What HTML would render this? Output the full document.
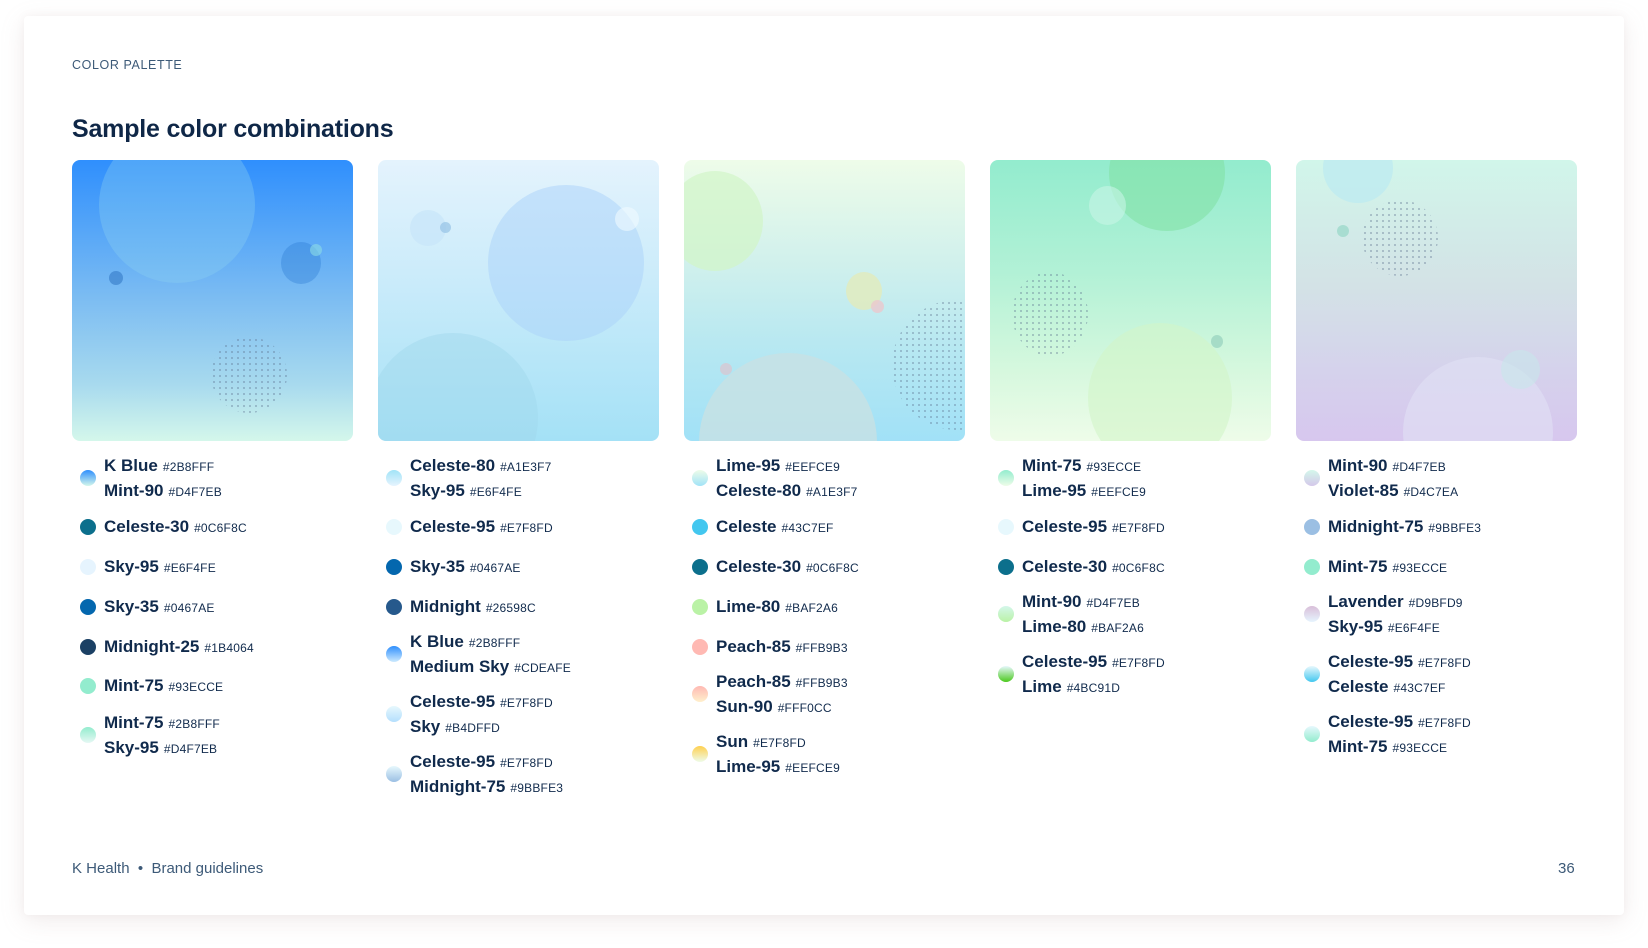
<!DOCTYPE html>
<html><head><meta charset="utf-8"><style>
*{margin:0;padding:0;box-sizing:border-box}
body{width:1648px;height:948px;background:#fff;font-family:"Liberation Sans",sans-serif;position:relative;overflow:hidden}
.panel{position:absolute;left:24px;top:16px;width:1600px;height:899px;background:#fff;border-radius:4px;box-shadow:0 6px 24px rgba(180,150,150,.18),0 0 8px rgba(180,150,150,.08)}
.lbl{position:absolute;left:72px;top:58px;font-size:12.5px;letter-spacing:.6px;color:#3d5a78}
h1{position:absolute;left:72px;top:115px;font-size:25px;font-weight:bold;color:#0f2747;letter-spacing:-.2px}
.card{position:absolute;top:160px;width:281px;height:281px;border-radius:8px;overflow:hidden}
.c{position:absolute;border-radius:50%}
.dots{position:absolute;border-radius:50%;background-image:radial-gradient(circle,rgba(90,110,140,.45) .8px,transparent 1.1px);background-size:6px 6px}
.it{position:absolute;font-size:17px;font-weight:bold;color:#102a4c;line-height:24px;white-space:nowrap}
.it small{font-size:12px;font-weight:normal;letter-spacing:.2px;margin-left:5px;color:#102a4c}
.d{position:absolute;width:16px;height:16px;border-radius:50%}
.ft{position:absolute;top:860px;font-size:15px;color:#3d5a78}
</style></head><body>
<div class="panel"></div>
<div class="lbl">COLOR PALETTE</div>
<h1>Sample color combinations</h1>

<div class="card" style="left:72px;background:linear-gradient(#2f8ffd,#7dbdf2 50%,#a8daee 80%,#d4f7eb)">
 <div class="c" style="left:27px;top:-33px;width:156px;height:156px;background:rgba(140,210,240,.35)"></div>
 <div class="c" style="left:209px;top:82px;width:40px;height:42px;background:rgba(40,120,210,.35)"></div>
 <div class="c" style="left:238px;top:84px;width:12px;height:12px;background:rgba(140,220,230,.6)"></div>
 <div class="c" style="left:37px;top:111px;width:14px;height:14px;background:rgba(40,110,190,.5)"></div>
 <div class="dots" style="left:139px;top:177px;width:76px;height:76px"></div>
</div>

<div class="card" style="left:378px;background:linear-gradient(#e4f3fd,#c9ebfa 45%,#a4e1f6)">
 <div class="c" style="left:110px;top:25px;width:156px;height:156px;background:rgba(170,210,250,.5)"></div>
 <div class="c" style="left:-10px;top:173px;width:170px;height:170px;background:rgba(160,215,235,.45)"></div>
 <div class="c" style="left:32px;top:50px;width:36px;height:36px;background:rgba(200,230,250,.7)"></div>
 <div class="c" style="left:62px;top:62px;width:11px;height:11px;background:rgba(150,195,230,.7)"></div>
 <div class="c" style="left:237px;top:47px;width:24px;height:24px;background:rgba(240,250,255,.6)"></div>
</div>

<div class="card" style="left:684px;background:linear-gradient(#eefce9,#d2f1ec 35%,#b8e8f1 65%,#a1e1f7)">
 <div class="c" style="left:-17px;top:11px;width:96px;height:100px;background:rgba(210,245,200,.7)"></div>
 <div class="c" style="left:15px;top:193px;width:178px;height:178px;background:rgba(200,225,228,.8)"></div>
 <div class="c" style="left:162px;top:112px;width:36px;height:38px;background:rgba(225,235,190,.85)"></div>
 <div class="c" style="left:187px;top:140px;width:13px;height:13px;background:rgba(235,200,205,.8)"></div>
 <div class="c" style="left:36px;top:203px;width:12px;height:12px;background:rgba(215,200,210,.8)"></div>
 <div class="dots" style="left:208px;top:140px;width:130px;height:130px"></div>
</div>

<div class="card" style="left:990px;background:linear-gradient(#93ecce,#b2f1d6 40%,#d6f8de 75%,#eefce9)">
 <div class="c" style="left:119px;top:-45px;width:116px;height:116px;background:rgba(130,225,165,.6)"></div>
 <div class="c" style="left:98px;top:163px;width:144px;height:150px;background:rgba(210,245,200,.6)"></div>
 <div class="c" style="left:99px;top:26px;width:37px;height:39px;background:rgba(200,245,230,.6)"></div>
 <div class="c" style="left:221px;top:175px;width:12px;height:13px;background:rgba(150,210,190,.7)"></div>
 <div class="dots" style="left:22px;top:112px;width:76px;height:84px"></div>
</div>

<div class="card" style="left:1296px;background:linear-gradient(#d1f6ea,#d3e2e6 45%,#d5d2ec 75%,#d7c7ee)">
 <div class="c" style="left:27px;top:-27px;width:70px;height:70px;background:rgba(190,235,240,.8)"></div>
 <div class="c" style="left:107px;top:197px;width:150px;height:150px;background:rgba(225,225,245,.6)"></div>
 <div class="c" style="left:205px;top:190px;width:39px;height:39px;background:rgba(200,230,235,.6)"></div>
 <div class="c" style="left:41px;top:65px;width:12px;height:12px;background:rgba(150,215,200,.7)"></div>
 <div class="dots" style="left:66px;top:40px;width:76px;height:76px"></div>
</div>

<div class="d" style="left:80px;top:470px;background:linear-gradient(#2f8ffd,#d4f7eb)"></div>
<div class="it" style="left:104px;top:454px">K Blue<small>#2B8FFF</small><br>Mint-90<small>#D4F7EB</small></div>
<div class="d" style="left:80px;top:519px;background:#0c6f8c"></div>
<div class="it" style="left:104px;top:515px">Celeste-30<small>#0C6F8C</small></div>
<div class="d" style="left:80px;top:559px;background:#e6f4fe"></div>
<div class="it" style="left:104px;top:555px">Sky-95<small>#E6F4FE</small></div>
<div class="d" style="left:80px;top:599px;background:#0467ae"></div>
<div class="it" style="left:104px;top:595px">Sky-35<small>#0467AE</small></div>
<div class="d" style="left:80px;top:639px;background:#1b4064"></div>
<div class="it" style="left:104px;top:635px">Midnight-25<small>#1B4064</small></div>
<div class="d" style="left:80px;top:678px;background:#93ecce"></div>
<div class="it" style="left:104px;top:674px">Mint-75<small>#93ECCE</small></div>
<div class="d" style="left:80px;top:727px;background:linear-gradient(#93ecce,#e6f8f4)"></div>
<div class="it" style="left:104px;top:711px">Mint-75<small>#2B8FFF</small><br>Sky-95<small>#D4F7EB</small></div>

<div class="d" style="left:386px;top:470px;background:linear-gradient(#a1e3f7,#e6f4fe)"></div>
<div class="it" style="left:410px;top:454px">Celeste-80<small>#A1E3F7</small><br>Sky-95<small>#E6F4FE</small></div>
<div class="d" style="left:386px;top:519px;background:#e7f8fd"></div>
<div class="it" style="left:410px;top:515px">Celeste-95<small>#E7F8FD</small></div>
<div class="d" style="left:386px;top:559px;background:#0467ae"></div>
<div class="it" style="left:410px;top:555px">Sky-35<small>#0467AE</small></div>
<div class="d" style="left:386px;top:599px;background:#26598c"></div>
<div class="it" style="left:410px;top:595px">Midnight<small>#26598C</small></div>
<div class="d" style="left:386px;top:646px;background:linear-gradient(#2f8ffd,#cdeafe)"></div>
<div class="it" style="left:410px;top:630px">K Blue<small>#2B8FFF</small><br>Medium Sky<small>#CDEAFE</small></div>
<div class="d" style="left:386px;top:706px;background:linear-gradient(#e7f8fd,#b4dffd)"></div>
<div class="it" style="left:410px;top:690px">Celeste-95<small>#E7F8FD</small><br>Sky<small>#B4DFFD</small></div>
<div class="d" style="left:386px;top:766px;background:linear-gradient(#e7f8fd,#9bbfe3)"></div>
<div class="it" style="left:410px;top:750px">Celeste-95<small>#E7F8FD</small><br>Midnight-75<small>#9BBFE3</small></div>

<div class="d" style="left:692px;top:470px;background:linear-gradient(#eefce9,#a1e3f7)"></div>
<div class="it" style="left:716px;top:454px">Lime-95<small>#EEFCE9</small><br>Celeste-80<small>#A1E3F7</small></div>
<div class="d" style="left:692px;top:519px;background:#43c7ef"></div>
<div class="it" style="left:716px;top:515px">Celeste<small>#43C7EF</small></div>
<div class="d" style="left:692px;top:559px;background:#0c6f8c"></div>
<div class="it" style="left:716px;top:555px">Celeste-30<small>#0C6F8C</small></div>
<div class="d" style="left:692px;top:599px;background:#baf2a6"></div>
<div class="it" style="left:716px;top:595px">Lime-80<small>#BAF2A6</small></div>
<div class="d" style="left:692px;top:639px;background:#ffb9b3"></div>
<div class="it" style="left:716px;top:635px">Peach-85<small>#FFB9B3</small></div>
<div class="d" style="left:692px;top:686px;background:linear-gradient(#ffb9b3,#fff0cc)"></div>
<div class="it" style="left:716px;top:670px">Peach-85<small>#FFB9B3</small><br>Sun-90<small>#FFF0CC</small></div>
<div class="d" style="left:692px;top:746px;background:linear-gradient(#ffd050,#eefce9)"></div>
<div class="it" style="left:716px;top:730px">Sun<small>#E7F8FD</small><br>Lime-95<small>#EEFCE9</small></div>

<div class="d" style="left:998px;top:470px;background:linear-gradient(#93ecce,#eefce9)"></div>
<div class="it" style="left:1022px;top:454px">Mint-75<small>#93ECCE</small><br>Lime-95<small>#EEFCE9</small></div>
<div class="d" style="left:998px;top:519px;background:#e7f8fd"></div>
<div class="it" style="left:1022px;top:515px">Celeste-95<small>#E7F8FD</small></div>
<div class="d" style="left:998px;top:559px;background:#0c6f8c"></div>
<div class="it" style="left:1022px;top:555px">Celeste-30<small>#0C6F8C</small></div>
<div class="d" style="left:998px;top:606px;background:linear-gradient(#d4f7eb,#baf2a6)"></div>
<div class="it" style="left:1022px;top:590px">Mint-90<small>#D4F7EB</small><br>Lime-80<small>#BAF2A6</small></div>
<div class="d" style="left:998px;top:666px;background:linear-gradient(#e7f8fd,#4bc91d)"></div>
<div class="it" style="left:1022px;top:650px">Celeste-95<small>#E7F8FD</small><br>Lime<small>#4BC91D</small></div>

<div class="d" style="left:1304px;top:470px;background:linear-gradient(#d4f7eb,#d4c7ea)"></div>
<div class="it" style="left:1328px;top:454px">Mint-90<small>#D4F7EB</small><br>Violet-85<small>#D4C7EA</small></div>
<div class="d" style="left:1304px;top:519px;background:#9bbfe3"></div>
<div class="it" style="left:1328px;top:515px">Midnight-75<small>#9BBFE3</small></div>
<div class="d" style="left:1304px;top:559px;background:#93ecce"></div>
<div class="it" style="left:1328px;top:555px">Mint-75<small>#93ECCE</small></div>
<div class="d" style="left:1304px;top:606px;background:linear-gradient(#d9bfd9,#e6f4fe)"></div>
<div class="it" style="left:1328px;top:590px">Lavender<small>#D9BFD9</small><br>Sky-95<small>#E6F4FE</small></div>
<div class="d" style="left:1304px;top:666px;background:linear-gradient(#e7f8fd,#43c7ef)"></div>
<div class="it" style="left:1328px;top:650px">Celeste-95<small>#E7F8FD</small><br>Celeste<small>#43C7EF</small></div>
<div class="d" style="left:1304px;top:726px;background:linear-gradient(#e7f8fd,#93ecce)"></div>
<div class="it" style="left:1328px;top:710px">Celeste-95<small>#E7F8FD</small><br>Mint-75<small>#93ECCE</small></div>

<div class="ft" style="left:72px">K Health &nbsp;•&nbsp; Brand guidelines</div>
<div class="ft" style="left:1558px">36</div>
</body></html>
